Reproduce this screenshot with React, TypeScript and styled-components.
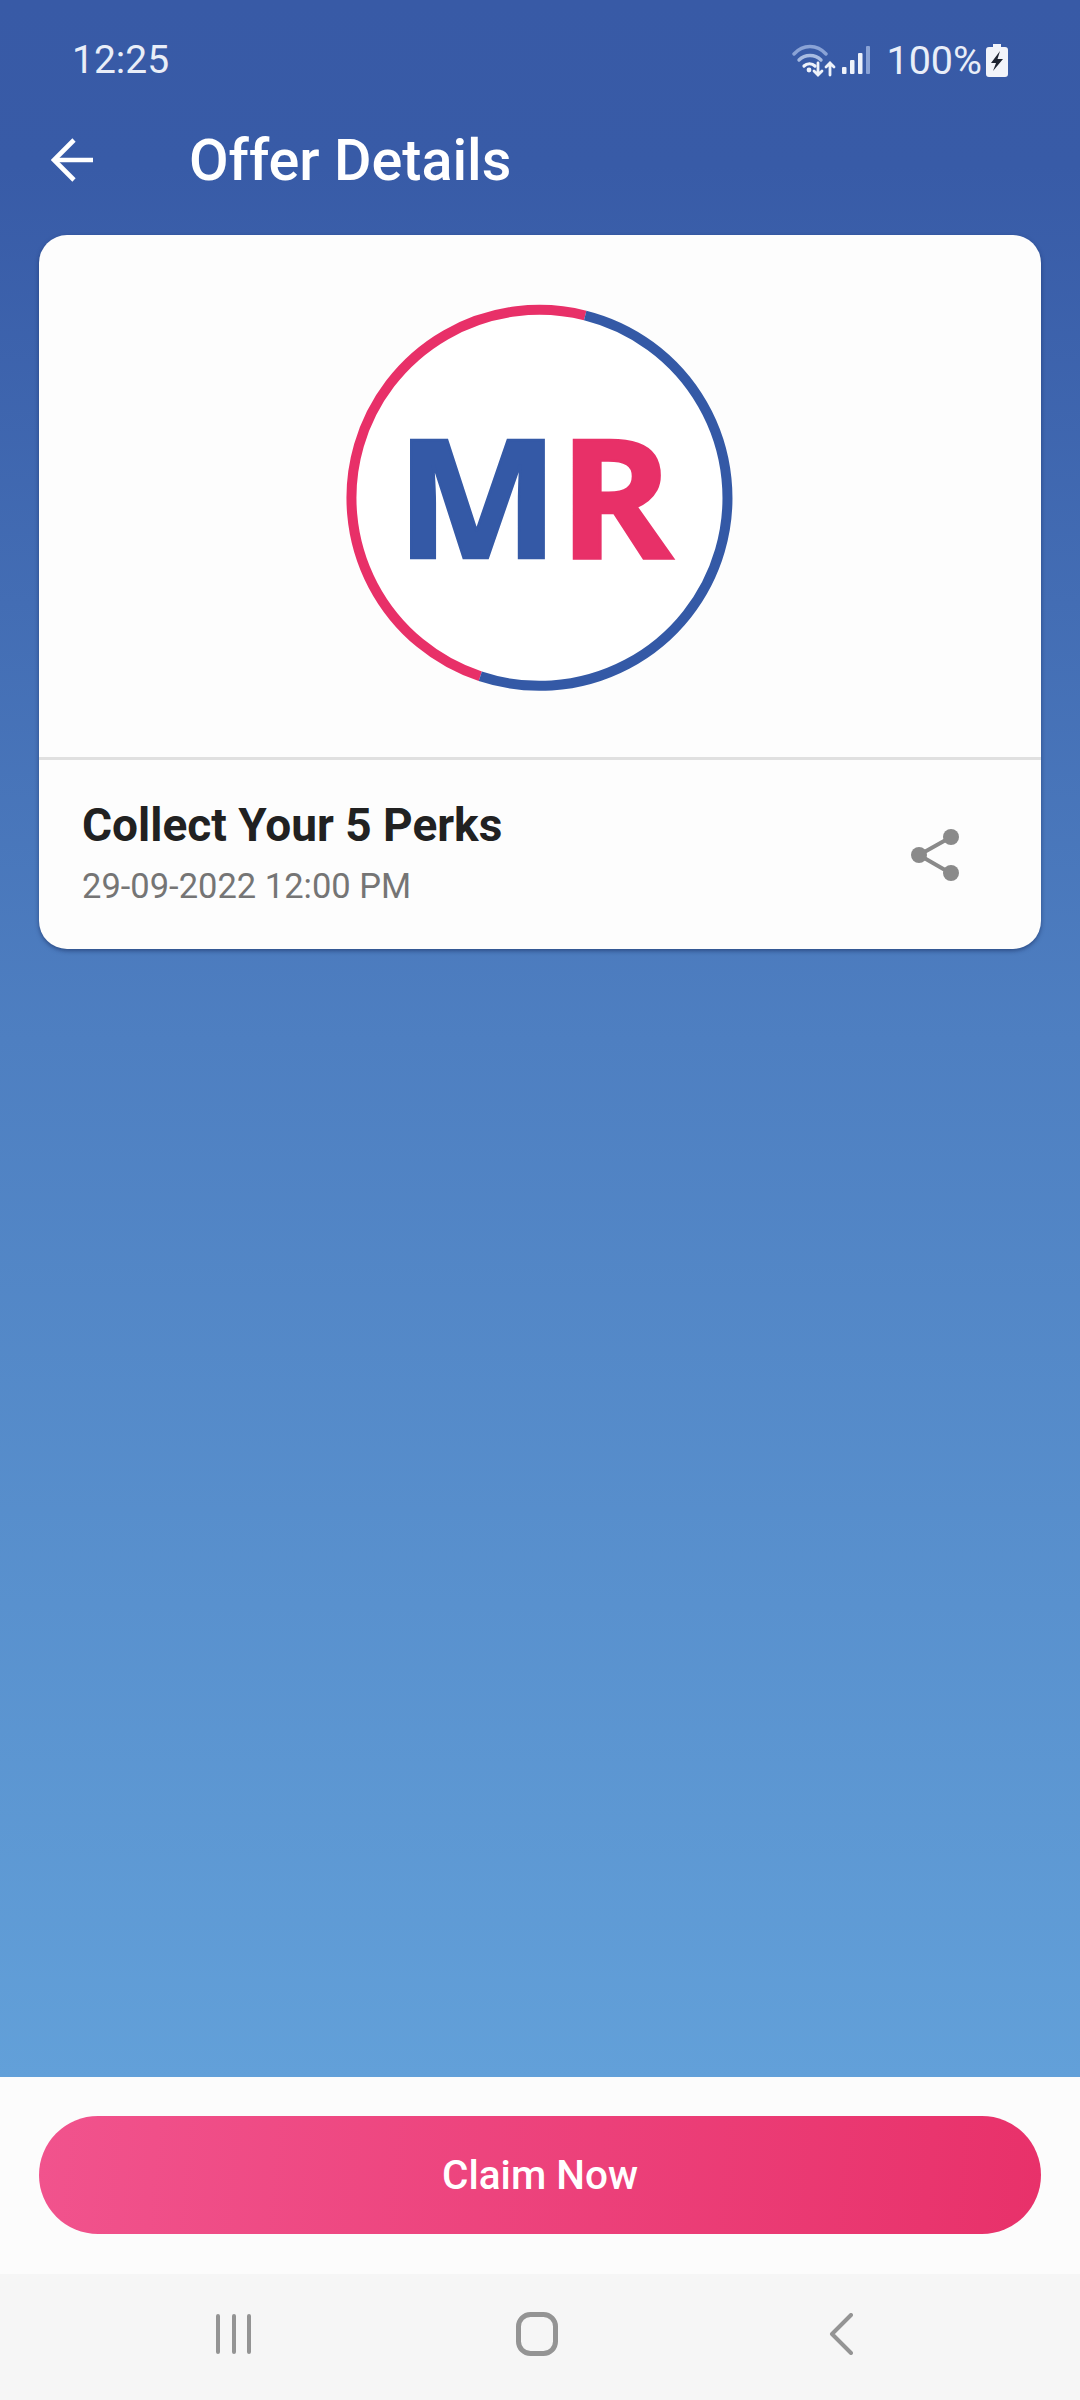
import * as React from 'react';
import styled, { createGlobalStyle } from 'styled-components';

const GlobalStyle = createGlobalStyle`
  html, body {
    margin: 0;
    padding: 0;
    background: #f6f6f6;
  }
  * {
    box-sizing: border-box;
  }
`

const Page = styled.div`
  width: 1080px;
  height: 2400px;
  display: flex;
  flex-direction: column;
  font-family: Roboto, "Liberation Sans", sans-serif;
  overflow: hidden;
`

const Main = styled.div`
  flex: 1;
  background: linear-gradient(180deg, #385aa6 0%, #385ba7 8%, #4e7fc1 50%, #62a0d9 100%);
`

const StatusBar = styled.div`
  height: 120px;
  padding: 0 72px;
  display: flex;
  align-items: center;
  justify-content: space-between;
  color: #e9eef8;
`

const Clock = styled.span`
  font-size: 39px;
`

const StatusRight = styled.div`
  display: flex;
  align-items: center;
`

const Percent = styled.span`
  font-size: 39.5px;
  margin: 0 4px 0 16px;
`

const Header = styled.div`
  height: 80px;
  margin-bottom: 35px;
  padding-left: 51px;
  display: flex;
  align-items: center;
  color: #fff;
`

const Title = styled.h1`
  margin: 0 0 0 96px;
  font-size: 57.5px;
  font-weight: 500;
`

const Card = styled.div`
  margin: 0 39px;
  background: #fdfdfd;
  border-radius: 28px;
  box-shadow: 0 2px 4px rgba(20, 40, 90, 0.55);
  overflow: hidden;
`

const LogoArea = styled.div`
  height: 522px;
  padding-top: 3px;
  display: flex;
  align-items: center;
  justify-content: center;
`

const Info = styled.div`
  height: 192px;
  border-top: 3px solid #e0e0e0;
  padding: 0 82px 0 43px;
  display: flex;
  align-items: center;
  justify-content: space-between;
`

const OfferText = styled.div`
  display: flex;
  flex-direction: column;
  margin-top: -5px;
`

const OfferName = styled.div`
  font-size: 46px;
  font-weight: 700;
  color: #212121;
  line-height: 52px;
`

const OfferDate = styled.div`
  font-size: 34.5px;
  color: #757575;
  line-height: 40px;
  margin-top: 15px;
`

const BottomBar = styled.div`
  height: 197px;
  background: #fcfcfc;
  padding: 39px 39px 0;
`

const ClaimButton = styled.button`
  width: 100%;
  height: 118px;
  border: 0;
  border-radius: 59px;
  background: linear-gradient(95deg, #f1538d 0%, #e8316a 100%);
  color: #fff;
  font-family: inherit;
  font-size: 40.5px;
  font-weight: 500;
`

const NavBar = styled.div`
  height: 126px;
  background: #f6f6f6;
  display: flex;
  align-items: center;
  padding: 0 0 6px 214px;
`

const NavSlot = styled.div<{ $gap: number }>`
  margin-left: ${props => props.$gap}px;
  display: flex;
`

const IconGap = styled.span`
  width: 6px;
`

const BackArrow = () => (
  <svg width="42" height="44" viewBox="0 0 42 44" fill="none" stroke="#fff" strokeWidth="4.6">
    <path d="M42 22H3" />
    <path d="M23 2L3 22l20 20" />
  </svg>
)

const WifiIcon = () => (
  <svg width="44" height="34" viewBox="0 0 44 34" fill="none" strokeLinecap="round">
    <path d="M2 11C11 1 25 1 34 11" stroke="#8aa3d6" strokeWidth="3.4" />
    <path d="M7 17c6-6 16-6 22 0" stroke="#a8bce2" strokeWidth="3.4" />
    <path d="M12 23c3-3 8-3 11 0" stroke="#eef2fa" strokeWidth="3.2" />
    <circle cx="17" cy="27" r="2.4" fill="#eef2fa" />
    <path d="M26 20v12M22 28l4 4 4-4" stroke="#eef2fa" strokeWidth="2.8" />
    <path d="M38 32V20M34 24l4-4 4 4" stroke="#eef2fa" strokeWidth="2.8" />
  </svg>
)

const SignalIcon = () => (
  <svg width="28" height="30" viewBox="0 0 28 30" fill="#eef2fa">
    <rect x="0" y="22" width="4.5" height="7" rx="1" />
    <rect x="8" y="15" width="4.5" height="14" rx="1" />
    <rect x="16" y="8" width="4.5" height="21" rx="1" />
    <rect x="24" y="1" width="4" height="28" rx="1" fill="#8aa3d6" />
  </svg>
)

const BatteryIcon = () => (
  <svg width="22" height="33" viewBox="0 0 22 33">
    <path d="M7 0h8v3h4a3 3 0 0 1 3 3v24a3 3 0 0 1-3 3H3a3 3 0 0 1-3-3V6a3 3 0 0 1 3-3h4z" fill="#f2f4fa" />
    <path d="M14 7L5 19h5l-3 8 10-12h-5.500z" fill="#1d2330" />
  </svg>
)

const Logo = () => (
  <svg width="400" height="400" viewBox="0 0 400 400">
    <circle cx="200" cy="200" r="188" fill="#fff" />
    <path d="M140.300 378.300A188 188 0 0 1 245.200 17.500" fill="none" stroke="#e83068" strokeWidth="10" />
    <path d="M245.200 17.500A188 188 0 1 1 140.300 378.300" fill="none" stroke="#3459a6" strokeWidth="10" />
    <text y="260" transform="scale(1.05 1)" fontFamily="'Open Sans', sans-serif" fontWeight="700" fontSize="165" strokeWidth="2.5">
      <tspan x="53" fill="#3459a6" stroke="#3459a6">M</tspan>
      <tspan x="208" fill="#e83068" stroke="#e83068">R</tspan>
    </text>
  </svg>
)

const ShareIcon = () => (
  <svg width="48" height="54" viewBox="0 0 48 54" fill="#8a8a8a" stroke="#8a8a8a">
    <path d="M41 8.500L8 27l33 19" fill="none" strokeWidth="4" />
    <circle cx="40" cy="9" r="8" stroke="none" />
    <circle cx="8" cy="27" r="8" stroke="none" />
    <circle cx="40" cy="45" r="8" stroke="none" />
  </svg>
)

const RecentsIcon = () => (
  <svg width="40" height="42" viewBox="0 0 40 42" stroke="#949494" strokeWidth="4" strokeLinecap="round">
    <path d="M4 3v36M20 3v36M35 3v36" />
  </svg>
)

const HomeIcon = () => (
  <svg width="42" height="44" viewBox="0 0 42 44" fill="none" stroke="#949494" strokeWidth="5">
    <rect x="2.500" y="2.500" width="37" height="39" rx="12" />
  </svg>
)

const NavBackIcon = () => (
  <svg width="24" height="42" viewBox="0 0 24 42" fill="none" stroke="#949494" strokeWidth="4" strokeLinecap="round" strokeLinejoin="round">
    <path d="M22 2L3 21l19 19" />
  </svg>
)

export default function App() {
  return (
    <Page>
      <GlobalStyle />
      <Main>
        <StatusBar>
          <Clock>12:25</Clock>
          <StatusRight>
            <WifiIcon />
            <IconGap />
            <SignalIcon />
            <Percent>100%</Percent>
            <BatteryIcon />
          </StatusRight>
        </StatusBar>
        <Header>
          <BackArrow />
          <Title>Offer Details</Title>
        </Header>
        <Card>
          <LogoArea>
            <Logo />
          </LogoArea>
          <Info>
            <OfferText>
              <OfferName>Collect Your 5 Perks</OfferName>
              <OfferDate>29-09-2022 12:00 PM</OfferDate>
            </OfferText>
            <ShareIcon />
          </Info>
        </Card>
      </Main>
      <BottomBar>
        <ClaimButton>Claim Now</ClaimButton>
      </BottomBar>
      <NavBar>
        <NavSlot $gap={0}><RecentsIcon /></NavSlot>
        <NavSlot $gap={262}><HomeIcon /></NavSlot>
        <NavSlot $gap={271}><NavBackIcon /></NavSlot>
      </NavBar>
    </Page>
  );
}
